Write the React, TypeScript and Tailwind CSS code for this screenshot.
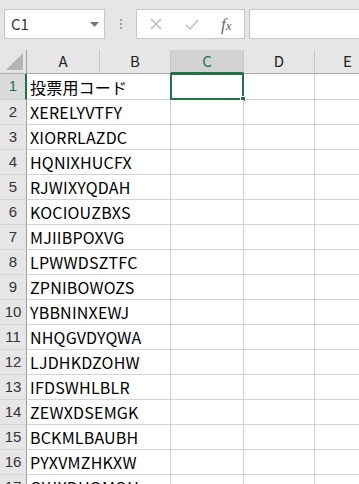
import React from 'react';

const codes = [
  '投票用コード',
  'XERELYVTFY',
  'XIORRLAZDC',
  'HQNIXHUCFX',
  'RJWIXYQDAH',
  'KOCIOUZBXS',
  'MJIIBPOXVG',
  'LPWWDSZTFC',
  'ZPNIBOWOZS',
  'YBBNINXEWJ',
  'NHQGVDYQWA',
  'LJDHKDZOHW',
  'IFDSWHLBLR',
  'ZEWXDSEMGK',
  'BCKMLBAUBH',
  'PYXVMZHKXW',
  'OYJXDHQMOU',
];

const font = { fontFamily: '"Noto Sans CJK JP", "Noto Sans", sans-serif' };

function ColHeader({ label, active }: { label: string; active?: boolean }) {
  return (
    <div
      className={
        active
          ? 'flex h-[24px] items-center justify-center border-r border-[#c6c6c6] border-b-2 border-b-[#217346] bg-[#d2d2d2] text-[15px] text-[#217346]'
          : 'flex h-[24px] items-center justify-center border-r border-[#c6c6c6] border-b border-b-[#ababab] text-[15px] text-[#222]'
      }
    >
      {label}
    </div>
  );
}

export default function App() {
  return (
    <div className="h-[484px] w-[359px] overflow-hidden bg-[#e6e6e6]" style={font}>
      {/* formula bar */}
      <div className="flex h-[50px] items-start pt-[9px]">
        <div className="ml-[4px] flex h-[30px] w-[101px] items-center justify-between border border-[#c6c6c6] bg-white pl-[6px] pr-[5px]">
          <span className="text-[15px] text-[#333]">C1</span>
          <svg width="9" height="5" viewBox="0 0 9 5">
            <path d="M0 0 L9 0 L4.5 5 Z" fill="#777" />
          </svg>
        </div>
        <div className="flex h-[30px] w-[31px] flex-col items-center justify-center gap-[2px]">
          <span className="h-[2px] w-[2px] bg-[#999]" />
          <span className="h-[2px] w-[2px] bg-[#999]" />
          <span className="h-[2px] w-[2px] bg-[#999]" />
        </div>
        <div className="flex h-[30px] w-[109px] items-center border border-[#c6c6c6] bg-white">
          <svg className="ml-[13px]" width="12" height="12" viewBox="0 0 12 12">
            <path d="M1 1 L11 11 M11 1 L1 11" stroke="#c0c0c0" strokeWidth="1.5" />
          </svg>
          <svg className="ml-[23px]" width="14" height="11" viewBox="0 0 14 11">
            <path d="M1 6 L5 10 L13 1" stroke="#c0c0c0" strokeWidth="1.6" fill="none" />
          </svg>
          <span
            className="ml-[22px] text-[17px] italic leading-none text-[#666]"
            style={{ fontFamily: '"Liberation Serif", serif' }}
          >
            f<span className="text-[13px]">x</span>
          </span>
        </div>
        <div className="ml-[4px] h-[30px] flex-1 border border-r-0 border-[#c6c6c6] bg-white" />
      </div>

      {/* grid */}
      <div className="grid grid-cols-[27px_73px_71px_73px_71px_1fr]">
        <div className="flex h-[24px] items-end justify-end border-r border-[#9f9f9f] border-b border-b-[#ababab] pb-[3px] pr-[3px]">
          <svg width="17" height="17" viewBox="0 0 17 17">
            <path d="M17 0 L17 17 L0 17 Z" fill="#b4b4b4" />
          </svg>
        </div>
        <ColHeader label="A" />
        <ColHeader label="B" />
        <ColHeader label="C" active />
        <ColHeader label="D" />
        <div className="flex h-[24px] items-center justify-start border-b border-b-[#ababab] pl-[28px] text-[15px] text-[#222]">
          E
        </div>

        {codes.map((code, i) => {
          const first = i === 0;
          const h = first ? 'h-[26px]' : 'h-[25px]';
          return (
            <React.Fragment key={i}>
              <div
                className={
                  first
                    ? 'flex h-[26px] items-center justify-center border-r-2 border-r-[#217346] border-b border-b-[#d4d4d4] bg-[#dadada] pl-px text-[15px] text-[#217346]'
                    : 'flex h-[25px] items-center justify-center border-r border-r-[#9f9f9f] border-b border-b-[#d4d4d4] text-[15px] text-[#333]'
                }
                style={{ fontFamily: '"Liberation Sans", sans-serif' }}
              >
                {i + 1}
              </div>
              <div
                className={`${h} relative z-10 flex items-center whitespace-nowrap border-b border-[#d4d4d4] bg-white pl-[3px] text-[16px] tracking-[0.2px] text-black`}
              >
                {code}
              </div>
              <div className={`${h} border-r border-b border-[#d4d4d4] bg-white`} />
              <div className={`${h} relative z-20 border-r border-b border-[#d4d4d4] bg-white`}>
                {first && (
                  <div className="absolute -left-px -top-px h-[27px] w-[74px] border-2 border-[#217346]">
                    <div className="absolute -bottom-[4px] -right-[4px] h-[6px] w-[6px] border border-white bg-[#217346]" />
                  </div>
                )}
              </div>
              <div className={`${h} border-r border-b border-[#d4d4d4] bg-white`} />
              <div className={`${h} border-b border-[#d4d4d4] bg-white`} />
            </React.Fragment>
          );
        })}
      </div>
    </div>
  );
}
